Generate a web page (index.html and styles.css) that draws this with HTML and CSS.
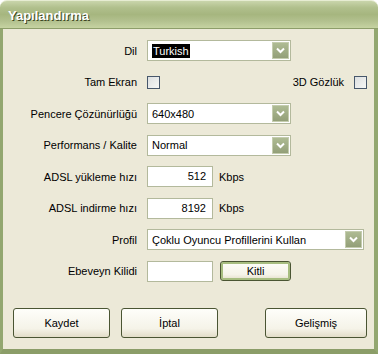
FILE: index.html
```html
<!DOCTYPE html>
<html>

<head>
    <title>Yapılandırma</title>
    <link rel="stylesheet" href="styles.css">
</head>

<body>
    <div class="window">
        <div class="titlebar">
            <span class="title">Yapılandırma</span>
        </div>

        <div class="client">
            <div class="form">
                <label class="lbl">Dil</label>
                <div class="ctl">
                    <div class="select w-mid">
                        <span class="sel-text"><span class="hl">Turkish</span></span>
                        <span class="arrow"><svg width="9" height="7" viewBox="0 0 9 7"><polyline points="1,1.5 4.5,5 8,1.5" fill="none" stroke="#fff" stroke-width="2"/></svg></span>
                    </div>
                </div>

                <label class="lbl">Tam Ekran</label>
                <div class="ctl">
                    <span class="check"></span>
                    <span class="right-opt">
                        <span class="opt-lbl">3D Gözlük</span>
                        <span class="check"></span>
                    </span>
                </div>

                <label class="lbl">Pencere Çözünürlüğü</label>
                <div class="ctl">
                    <div class="select w-mid">
                        <span class="sel-text">640x480</span>
                        <span class="arrow"><svg width="9" height="7" viewBox="0 0 9 7"><polyline points="1,1.5 4.5,5 8,1.5" fill="none" stroke="#fff" stroke-width="2"/></svg></span>
                    </div>
                </div>

                <label class="lbl">Performans / Kalite</label>
                <div class="ctl">
                    <div class="select w-mid">
                        <span class="sel-text">Normal</span>
                        <span class="arrow"><svg width="9" height="7" viewBox="0 0 9 7"><polyline points="1,1.5 4.5,5 8,1.5" fill="none" stroke="#fff" stroke-width="2"/></svg></span>
                    </div>
                </div>

                <label class="lbl">ADSL yükleme hızı</label>
                <div class="ctl">
                    <div class="textbox num">512</div>
                    <span class="unit">Kbps</span>
                </div>

                <label class="lbl">ADSL indirme hızı</label>
                <div class="ctl">
                    <div class="textbox num">8192</div>
                    <span class="unit">Kbps</span>
                </div>

                <label class="lbl">Profil</label>
                <div class="ctl">
                    <div class="select w-wide">
                        <span class="sel-text">Çoklu Oyuncu Profillerini Kullan</span>
                        <span class="arrow"><svg width="9" height="7" viewBox="0 0 9 7"><polyline points="1,1.5 4.5,5 8,1.5" fill="none" stroke="#fff" stroke-width="2"/></svg></span>
                    </div>
                </div>

                <label class="lbl">Ebeveyn Kilidi</label>
                <div class="ctl">
                    <div class="textbox"></div>
                    <button type="button" class="btn btn-small btn-default">Kitli</button>
                </div>
            </div>

            <div class="buttons">
                <button type="button" class="btn btn-big">Kaydet</button>
                <button type="button" class="btn btn-big">İptal</button>
                <button type="button" class="btn btn-big btn-adv">Gelişmiş</button>
            </div>
        </div>
    </div>
</body>

</html>
```

FILE: styles.css
```css
html {
    background-color: #ffffff;
}

body {
    margin: 0;
    padding: 0;
    font-family: "Liberation Sans", Arial, sans-serif;
    font-size: 11px;
    color: #000000;
}

.window {
    width: 378px;
    height: 354px;
    display: flex;
    flex-direction: column;
}

/* title bar */
.titlebar {
    height: 29px;
    box-sizing: border-box;
    border-radius: 7px 7px 0 0;
    border-top: 1px solid #e6ecd2;
    border-bottom: 1px solid #8d9d6a;
    background: linear-gradient(to bottom, #c9d5ab 0%, #b0bf8c 25%, #a6b67f 50%, #b3c18f 75%, #c6d3a2 100%);
    display: flex;
    align-items: center;
    padding-left: 8px;
}

.title {
    color: #ffffff;
    font-weight: bold;
    font-size: 13px;
    text-shadow: 1px 1px 0 #3c4724;
    padding-top: 1px;
}

/* window body */
.client {
    flex: 1;
    background-color: #ece9d8;
    border-left: 3px solid #93a770;
    border-right: 4px solid #93a770;
    border-bottom: 5px solid #8b9d68;
    display: flex;
    flex-direction: column;
}

.form {
    display: grid;
    grid-template-columns: 134px 1fr;
    grid-auto-rows: 21px;
    column-gap: 10px;
    row-gap: 10.5px;
    padding: 11px 7px 0 0;
}

.lbl {
    align-self: center;
    text-align: right;
    white-space: nowrap;
}

.ctl {
    display: flex;
    align-items: center;
}

/* dropdowns */
.select {
    height: 21px;
    box-sizing: border-box;
    border: 1px solid #b3b99c;
    background-color: #ffffff;
    display: flex;
    align-items: center;
    justify-content: space-between;
    padding: 1px;
}

.w-mid {
    width: 144px;
}

.w-wide {
    width: 217px;
}

.sel-text {
    padding-left: 3px;
    white-space: nowrap;
}

.hl {
    background-color: #000000;
    color: #ffffff;
    padding: 1px 1px;
}

.arrow {
    width: 17px;
    height: 17px;
    box-sizing: border-box;
    border: 1px solid #c4ccae;
    background: linear-gradient(to bottom, #aebb93, #939f78);
    display: flex;
    align-items: center;
    justify-content: center;
}

/* checkboxes */
.check {
    width: 13px;
    height: 13px;
    box-sizing: border-box;
    border: 1px solid #47576b;
    background: linear-gradient(135deg, #dcdfe0, #f6f7f5);
    display: inline-block;
}

.right-opt {
    margin-left: auto;
    display: flex;
    align-items: center;
    gap: 10px;
}

/* text boxes */
.textbox {
    width: 66px;
    height: 21px;
    box-sizing: border-box;
    border: 1px solid #b3b99c;
    background-color: #ffffff;
    line-height: 19px;
}

.num {
    text-align: right;
    padding-right: 6px;
}

.unit {
    margin-left: 6px;
}

/* buttons */
.btn {
    font-family: "Liberation Sans", Arial, sans-serif;
    font-size: 11px;
    color: #000000;
    border: 1px solid #4a5533;
    border-radius: 3px;
    background: linear-gradient(to bottom, #fefefa 0%, #f5f3e8 70%, #e2ddc8 100%);
    padding: 0;
    cursor: pointer;
}

.btn-small {
    width: 71px;
    height: 20px;
    margin-left: 7px;
}

.btn-default {
    box-shadow: inset 0 0 0 2px #a7bd80;
}

.buttons {
    display: flex;
    gap: 11px;
    margin-top: 26px;
    padding: 0 7px 0 10px;
}

.btn-big {
    width: 97px;
    height: 30px;
}

.btn-adv {
    width: 102px;
    margin-left: auto;
}
```
